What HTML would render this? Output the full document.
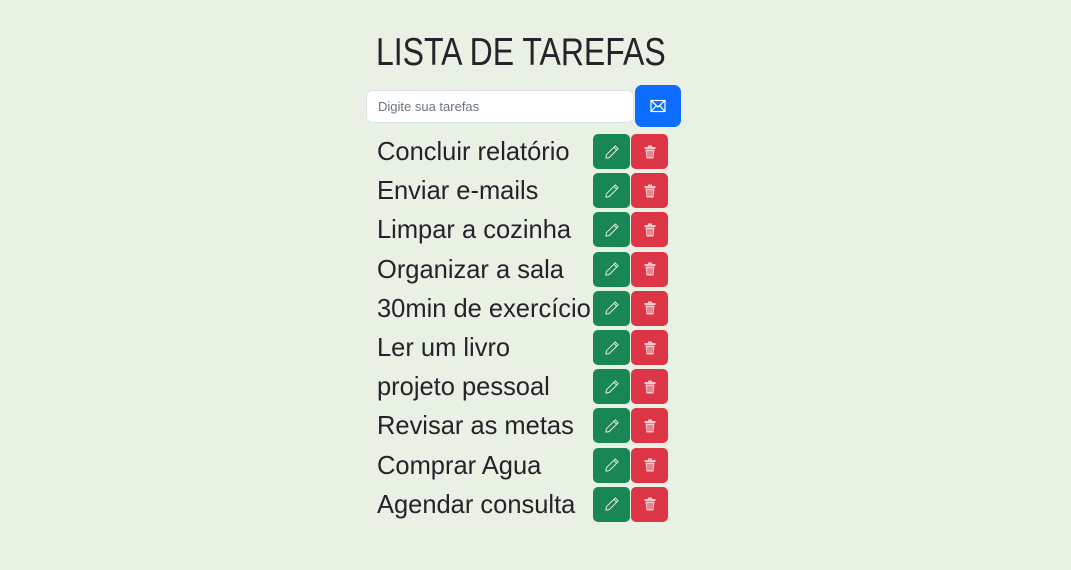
<!DOCTYPE html>
<html><head><style>
body{margin:0;width:1071px;height:570px;background:#e9f1e5;font-family:"Liberation Sans",sans-serif;color:#212529;position:relative;overflow:hidden}
h1{position:absolute;left:376px;top:31px;margin:0;font-size:39px;font-weight:500;line-height:44px;transform:scaleX(0.82);transform-origin:0 0;white-space:nowrap}
.inp{position:absolute;left:366px;top:90px;background:#fff;border:1px solid #dee2e6;border-radius:6px;font-size:13px;color:#6c757d;line-height:31px;padding-left:11px;box-sizing:border-box;width:268px;height:33px}
.send{position:absolute;left:635px;top:85px;width:46px;height:42px;background:#0d6efd;border-radius:7px}
.row{position:absolute;left:377px;height:35px;width:300px}
.row span{position:absolute;left:0;top:0;font-size:26px;line-height:34px;transform:scaleX(0.98);transform-origin:0 0;white-space:nowrap}
.b{position:absolute;top:0;width:37px;height:35px;border-radius:5px}
.g{left:216px;background:#198754}
.r{left:254px;background:#dc3545}
svg{position:absolute;left:50%;top:50%;transform:translate(-50%,-50%)}
</style></head><body>
<h1>LISTA DE TAREFAS</h1>
<div class="inp">Digite sua tarefas</div>
<div class="send"><svg width="16" height="14" viewBox="0 0 16 14"><rect x="1" y="1.5" width="14" height="11" fill="none" stroke="#fff" stroke-width="1.2"/><path d="M1 1.5L8 8L15 1.5M1 12.5L6 7M15 12.5L10 7" fill="none" stroke="#fff" stroke-width="1.2"/></svg></div>
<div id="list"></div>
<script>
var t=["Concluir relatório","Enviar e-mails","Limpar a cozinha","Organizar a sala","30min de exercício","Ler um livro","projeto pessoal","Revisar as metas","Comprar Agua","Agendar consulta"];
var h="";
t.forEach(function(s,i){var y=134+i*39.2;
h+='<div class="row" style="top:'+y+'px"><span>'+s+'</span><div class="b g"><svg width="15" height="15" viewBox="0 0 16 16"><path d="M11.5 1.5l3 3L5 14l-3.5 0.5L2 11z M10 3l3 3" fill="none" stroke="#e8f3ec" stroke-width="1"/></svg></div><div class="b r"><svg width="12" height="14" viewBox="0 0 12 14"><rect x="0.5" y="2" width="11" height="2" fill="#f6c9ce"/><rect x="4" y="0.5" width="4" height="2" fill="#f6c9ce"/><path d="M1.5 4.5h9l-1 9h-7z" fill="#f6c9ce"/><path d="M4 6v6M6 6v6M8 6v6" stroke="#dc3545" stroke-width="0.9"/></svg></div></div>';});
document.getElementById("list").innerHTML=h;
</script>
</body></html>
